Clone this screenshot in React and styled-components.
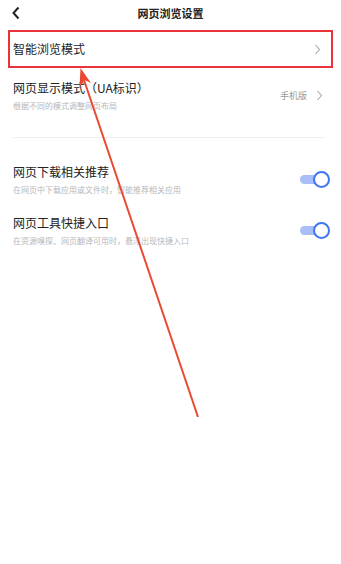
import React from "react";
import styled, { createGlobalStyle } from "styled-components";

const Global = createGlobalStyle`
  html, body { margin: 0; padding: 0; background: #fff; }
  body {
    font-family: "Noto Sans CJK SC", "Noto Sans", sans-serif;
    color: #222;
  }
`;

const Page = styled.div`
  position: relative;
  width: 341px;
  height: 564px;
  overflow: hidden;
  background: #fff;
`;

const Header = styled.div`
  position: relative;
  height: 26px;
  display: flex;
  align-items: center;
  justify-content: center;
`;

const BackBtn = styled.div`
  position: absolute;
  left: 11px;
  top: 6px;
  display: flex;
`;

const Title = styled.div`
  font-size: 11px;
  font-weight: 700;
  line-height: 1;
`;

const Highlight = styled.div`
  margin: 4px 8px 0;
  height: 38px;
  box-sizing: border-box;
  border: 2px solid #e8333a;
  display: flex;
  align-items: center;
  justify-content: space-between;
  padding: 0 10px 0 3px;
`;

const Row = styled.div`
  display: flex;
  align-items: center;
  justify-content: space-between;
  padding: ${(p) => p.$pad || "0"};
  margin: 0 13px;
`;

const TextCol = styled.div`
  display: flex;
  flex-direction: column;
`;

const RowTitle = styled.div`
  font-size: 12px;
  line-height: 16px;
  color: #222;
  white-space: nowrap;
`;

const RowSub = styled.div`
  font-size: 8px;
  line-height: 10px;
  margin-top: 5px;
  color: #b8b8b8;
  white-space: nowrap;
`;

const Right = styled.div`
  display: flex;
  align-items: center;
  gap: 9px;
  margin-right: 5px;
`;

const Value = styled.span`
  font-size: 9px;
  color: #9a9a9a;
`;

const Divider = styled.div`
  height: 1px;
  background: #efefef;
  margin: 26px 16px 0 13px;
`;

const Toggle = styled.div`
  position: relative;
  width: 30px;
  height: 17px;
  margin-right: -2px;
`;

const Track = styled.div`
  position: absolute;
  left: 0;
  top: 4px;
  width: 24px;
  height: 9px;
  border-radius: 5px;
  background: #a9bdf6;
`;

const Knob = styled.div`
  position: absolute;
  right: 0;
  top: 0;
  width: 17px;
  height: 17px;
  box-sizing: border-box;
  border-radius: 50%;
  border: 2.5px solid #3f74f2;
  background: #fff;
`;

const Overlay = styled.svg`
  position: absolute;
  left: 0;
  top: 0;
  pointer-events: none;
`;

const Chevron = () => (
  <svg width="7" height="11" viewBox="0 0 7 11">
    <polyline points="1.5,1 5.5,5.5 1.5,10" fill="none" stroke="#a8a8a8" strokeWidth="1.1" />
  </svg>
);

const Switch = () => (
  <Toggle>
    <Track />
    <Knob />
  </Toggle>
);

export default function App() {
  return (
    <>
      <Global />
      <Page>
        <Header>
          <BackBtn>
            <svg width="10" height="14" viewBox="0 0 10 14">
              <polyline points="7.5,1.5 2.5,7 7.5,12.5" fill="none" stroke="#222" strokeWidth="2" />
            </svg>
          </BackBtn>
          <Title>网页浏览设置</Title>
        </Header>

        <Highlight>
          <RowTitle>智能浏览模式</RowTitle>
          <Chevron />
        </Highlight>

        <Row $pad="12px 0 0">
          <TextCol>
            <RowTitle>网页显示模式（UA标识）</RowTitle>
            <RowSub>根据不同的模式调整网页布局</RowSub>
          </TextCol>
          <Right>
            <Value>手机版</Value>
            <Chevron />
          </Right>
        </Row>

        <Divider />

        <Row $pad="26px 0 0">
          <TextCol>
            <RowTitle>网页下载相关推荐</RowTitle>
            <RowSub>在网页中下载应用或文件时，智能推荐相关应用</RowSub>
          </TextCol>
          <Switch />
        </Row>

        <Row $pad="20px 0 0">
          <TextCol>
            <RowTitle>网页工具快捷入口</RowTitle>
            <RowSub>在资源嗅探、网页翻译可用时，悬浮出现快捷入口</RowSub>
          </TextCol>
          <Switch />
        </Row>

        <Overlay width="341" height="564" viewBox="0 0 341 564">
          <line x1="198" y1="417" x2="84" y2="80" stroke="#ea4a33" strokeWidth="2" />
          <polygon points="80.5,68 91,83 84.5,80 79.5,87" fill="#ea4a33" />
        </Overlay>
      </Page>
    </>
  );
}
